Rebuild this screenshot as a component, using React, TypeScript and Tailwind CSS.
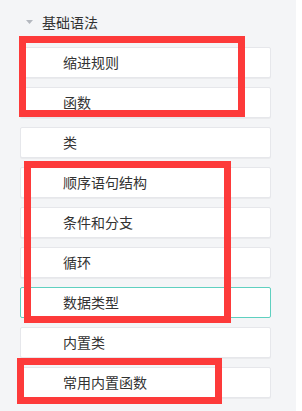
const items = [
  { id: "indent", label: "缩进规则" },
  { id: "func", label: "函数" },
  { id: "class", label: "类" },
  { id: "seq", label: "顺序语句结构" },
  { id: "cond", label: "条件和分支" },
  { id: "loop", label: "循环" },
  { id: "types", label: "数据类型", active: true },
  { id: "builtin-class", label: "内置类" },
  { id: "builtin-func", label: "常用内置函数" },
];

// red annotation boxes drawn on top of the list
const marks = [
  { left: 19, top: 36, width: 226, height: 81 },
  { left: 24, top: 161, width: 207, height: 162 },
  { left: 17, top: 358, width: 205, height: 46 },
];

export default function App() {
  return (
    <div
      className="relative flex h-[411px] w-[302px] overflow-hidden bg-white text-[#333]"
      style={{ fontFamily: '"Noto Sans CJK SC", "Noto Sans", sans-serif' }}
    >
      <aside className="h-full w-[296px] bg-[#f4f5f7]">
        <div className="flex h-[44px] items-center pl-[26px]">
          <svg width="7" height="4" viewBox="0 0 7 4" className="mr-[9px]">
            <path d="M0 0 L7 0 L3.5 4 z" fill="#b4b8bf" />
          </svg>
          <span className="text-[14px] leading-none">基础语法</span>
        </div>

        <ul className="mt-[3px] flex flex-col gap-[9px] pl-[20px]">
          {items.map((item) => (
            <li
              key={item.id}
              className={
                item.active
                  ? "flex h-[31px] w-[251px] items-center rounded-[2px] border border-[#5fd0c0] bg-white pl-[42px] text-[14px]"
                  : "flex h-[31px] w-[251px] items-center rounded-[2px] border border-[#e6e7eb] bg-white pl-[42px] text-[14px] shadow-[0_1px_0_rgba(0,0,0,0.04)]"
              }
            >
              {item.label}
            </li>
          ))}
        </ul>
      </aside>

      {marks.map((m, i) => (
        <div
          key={i}
          className="pointer-events-none absolute border-[7px] border-[#fd3a3a]"
          style={{ left: m.left, top: m.top, width: m.width, height: m.height }}
        />
      ))}
    </div>
  );
}
